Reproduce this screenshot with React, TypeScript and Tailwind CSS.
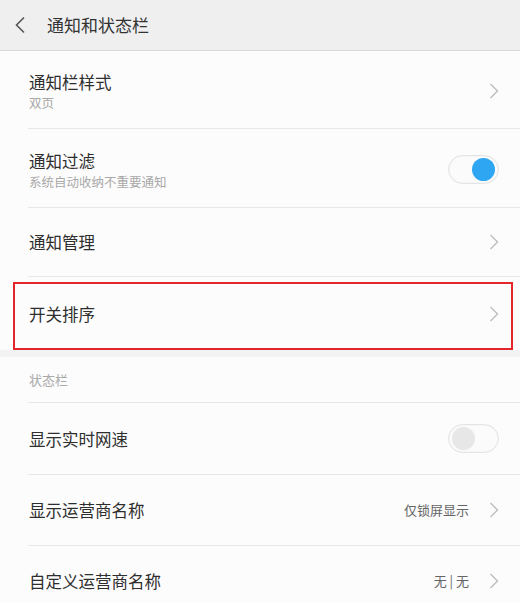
const font = { fontFamily: '"Noto Sans CJK SC", "Noto Sans", sans-serif' };

function Chevron() {
  return (
    <svg width="10" height="16" viewBox="0 0 10 16" className="shrink-0">
      <path d="M1.5 1 L8.5 8 L1.5 15" fill="none" stroke="#bdbdbd" strokeWidth="1.4" />
    </svg>
  );
}

function Toggle({ on }: { on: boolean }) {
  return (
    <div className="w-[51px] h-[29px] rounded-full border border-[#e4e4e4] bg-[#fbfbfb] shadow-[inset_0_0_2px_rgba(0,0,0,0.08)] flex items-center px-[3px]">
      {on ? (
        <div className="ml-auto w-[23px] h-[23px] rounded-full bg-[#2ea6f2]" />
      ) : (
        <div className="w-[23px] h-[23px] rounded-full bg-[#e7e7e7]" />
      )}
    </div>
  );
}

function Divider() {
  return <div className="ml-[28px] h-px bg-[#e8e8e8]" />;
}

type RowProps = {
  title: string;
  sub?: string;
  value?: string;
  right: 'chevron' | 'on' | 'off';
  h: string;
};

function Row({ title, sub, value, right, h }: RowProps) {
  return (
    <div className={`flex items-center pl-[29px] pr-[21px] ${h}`}>
      <div className="flex-1">
        <div className="text-[16.5px] leading-[24px] text-[#2e2e2e]">{title}</div>
        {sub && <div className="text-[12.5px] leading-[17px] text-[#a8a8a8]">{sub}</div>}
      </div>
      {value && <span className="mr-[20px] text-[13px] text-[#666]">{value}</span>}
      {right === 'chevron' && <Chevron />}
      {right === 'on' && <Toggle on />}
      {right === 'off' && <Toggle on={false} />}
    </div>
  );
}

export default function App() {
  return (
    <div className="w-[520px] h-[602px] overflow-hidden bg-[#fcfcfc]" style={font}>
      <div className="h-[51px] bg-[#efefef] border-b border-[#d8d8d8] flex items-center">
        <svg width="12" height="18" viewBox="0 0 12 18" className="ml-[14px]">
          <path d="M10 1.5 L2.5 9 L10 16.5" fill="none" stroke="#555" strokeWidth="1.6" />
        </svg>
        <span className="ml-[21px] text-[17px] text-[#333]">通知和状态栏</span>
      </div>

      <Row title="通知栏样式" sub="双页" right="chevron" h="h-[77px] pt-[2px]" />
      <Divider />
      <Row title="通知过滤" sub="系统自动收纳不重要通知" right="on" h="h-[78px] pt-[2px]" />
      <Divider />
      <Row title="通知管理" right="chevron" h="h-[68px]" />
      <Divider />
      <div className="relative">
        <Row title="开关排序" right="chevron" h="h-[73px]" />
        <div className="absolute left-[13px] right-[7px] top-[5px] bottom-0 border-2 border-[#e3262b]" />
      </div>
      <div className="h-[7px] bg-[#f3f3f3]" />

      <div className="h-[45px] flex items-center pl-[29px] text-[13px] text-[#aaa]">状态栏</div>
      <Divider />
      <Row title="显示实时网速" right="off" h="h-[71px]" />
      <Divider />
      <Row title="显示运营商名称" value="仅锁屏显示" right="chevron" h="h-[70px]" />
      <Divider />
      <Row title="自定义运营商名称" value="无 | 无" right="chevron" h="h-[70px]" />
    </div>
  );
}
